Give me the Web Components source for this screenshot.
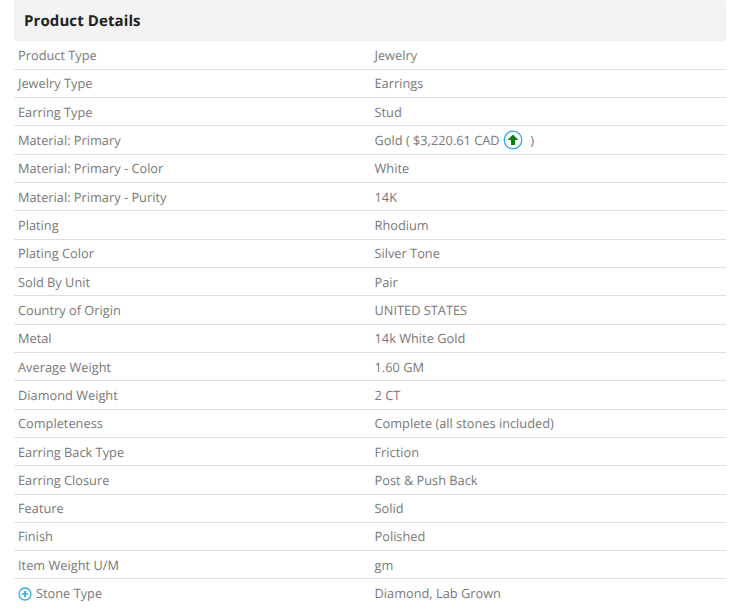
<!DOCTYPE html>
<html><head><meta charset="utf-8"><style>
html,body{margin:0;background:#fff;height:615px;overflow:hidden}
body{font-family:"Open Sans",sans-serif;text-rendering:geometricPrecision}
</style></head><body>
<template id="tp-panel"><style>
:host{display:block;margin:0 14px;width:712px;height:615px;overflow:hidden}
header{height:41px;box-sizing:border-box;background:#f3f3f3;border:1px solid #eee;border-top:0;border-radius:4px;padding:2px 9px 0;display:flex;align-items:center;font:700 15px/20px "Open Sans",sans-serif;color:#222;letter-spacing:.1px;margin-bottom:.5px}
</style><header><slot name="title"></slot></header><slot></slot></template>
<template id="tp-row"><style>
:host{display:grid;grid-template-columns:356.5px 1fr;height:28.32px;box-sizing:border-box;border-bottom:1px solid #dedede;font:12.8px/27px "Open Sans",sans-serif;color:#787878;padding:1px 0 0 4px}
:host([last]){border-bottom:0}
.l,.v{display:flex;align-items:center;white-space:pre;height:26.32px}
</style><div class="l"><slot name="label"></slot></div><div class="v"><slot></slot></div></template>
<template id="tp-up"><style>
:host{display:inline-flex;width:20px;height:20px;margin:0 7px 0 3.5px;transform:translateY(-1px)}
svg{display:block}
</style><svg width="20" height="20" viewBox="0 0 20 20"><circle cx="10" cy="10" r="8.8" fill="#fff" stroke="#35a9e4" stroke-width="1.3"/><path d="M10 4.6 15.4 10H12V15H8V10H4.6Z" fill="#0a7d16"/></svg></template>
<template id="tp-plus"><style>
:host{display:inline-flex;width:14px;height:14px;margin-right:4px}
svg{display:block}
</style><svg width="14" height="14" viewBox="0 0 14 14"><circle cx="7" cy="7" r="6" fill="#fff" stroke="#35a9e4" stroke-width="1.3"/><path d="M7 3.8V10.2M3.8 7H10.2" stroke="#35a9e4" stroke-width="1.7"/></svg></template>

<product-panel>
<span slot="title">Product Details</span>
<spec-row><span slot="label">Product Type</span>Jewelry</spec-row>
<spec-row><span slot="label">Jewelry Type</span>Earrings</spec-row>
<spec-row><span slot="label">Earring Type</span>Stud</spec-row>
<spec-row><span slot="label">Material: Primary</span>Gold ( $3,220.61 CAD<price-up></price-up>)</spec-row>
<spec-row><span slot="label">Material: Primary - Color</span>White</spec-row>
<spec-row><span slot="label">Material: Primary - Purity</span>14K</spec-row>
<spec-row><span slot="label">Plating</span>Rhodium</spec-row>
<spec-row><span slot="label">Plating Color</span>Silver Tone</spec-row>
<spec-row><span slot="label">Sold By Unit</span>Pair</spec-row>
<spec-row><span slot="label">Country of Origin</span>UNITED STATES</spec-row>
<spec-row><span slot="label">Metal</span>14k White Gold</spec-row>
<spec-row><span slot="label">Average Weight</span>1.60 GM</spec-row>
<spec-row><span slot="label">Diamond Weight</span>2 CT</spec-row>
<spec-row><span slot="label">Completeness</span>Complete (all stones included)</spec-row>
<spec-row><span slot="label">Earring Back Type</span>Friction</spec-row>
<spec-row><span slot="label">Earring Closure</span>Post &amp; Push Back</spec-row>
<spec-row><span slot="label">Feature</span>Solid</spec-row>
<spec-row><span slot="label">Finish</span>Polished</spec-row>
<spec-row><span slot="label">Item Weight U/M</span>gm</spec-row>
<spec-row last><span slot="label" style="display:flex;align-items:center"><expand-plus></expand-plus>Stone Type</span>Diamond, Lab Grown</spec-row>
</product-panel>
<script>
function def(name,tp){customElements.define(name,class extends HTMLElement{constructor(){super();this.attachShadow({mode:"open"}).appendChild(document.getElementById(tp).content.cloneNode(true));}});}
def("product-panel","tp-panel");def("spec-row","tp-row");def("price-up","tp-up");def("expand-plus","tp-plus");
</script>
</body></html>
